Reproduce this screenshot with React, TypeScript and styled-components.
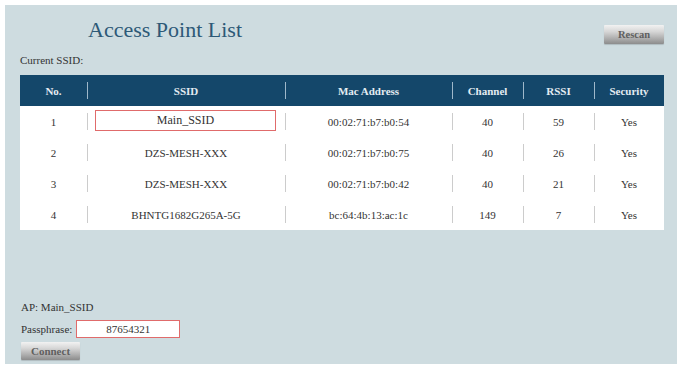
import styled, { createGlobalStyle } from "styled-components"

const GlobalStyle = createGlobalStyle`
  html, body {
    margin: 0;
    padding: 0;
    background: #ffffff;
  }
  body {
    font-family: "Liberation Serif", "Times New Roman", serif;
    color: #333333;
  }
`

const COLUMNS = "67px 198px 167px 71px 71px 70px"

interface AccessPoint {
    no: number;
    ssid: string;
    mac: string;
    channel: number;
    rssi: number;
    security: string;
}

const accessPoints: AccessPoint[] = [
    { no: 1, ssid: "Main_SSID", mac: "00:02:71:b7:b0:54", channel: 40, rssi: 59, security: "Yes" },
    { no: 2, ssid: "DZS-MESH-XXX", mac: "00:02:71:b7:b0:75", channel: 40, rssi: 26, security: "Yes" },
    { no: 3, ssid: "DZS-MESH-XXX", mac: "00:02:71:b7:b0:42", channel: 40, rssi: 21, security: "Yes" },
    { no: 4, ssid: "BHNTG1682G265A-5G", mac: "bc:64:4b:13:ac:1c", channel: 149, rssi: 7, security: "Yes" },
]

const Panel = styled.div`
  margin: 5px;
  width: 672px;
  height: 359px;
  box-sizing: border-box;
  padding: 12px 13px 0 15px;
  background: #cedce0;
  display: flex;
  flex-direction: column;
`

const TitleRow = styled.div`
  display: flex;
  justify-content: space-between;
  align-items: flex-start;
  height: 33px;
`

const Title = styled.h1`
  margin: 0 0 0 68px;
  font-size: 22px;
  line-height: 26px;
  font-weight: normal;
  color: #2d5977;
`

const GreyButton = styled.button<{ $width: number; $height: number }>`
  width: ${({ $width }): string => `${$width}px`};
  height: ${({ $height }): string => `${$height}px`};
  padding: 0;
  border: none;
  border-radius: 1px;
  background: linear-gradient(to bottom, #f2f2f2 0%, #d6d6d6 35%, #a9a9a9 75%, #8c8c8c 100%);
  box-shadow: 0 1px 1px rgba(0, 0, 0, 0.15);
  font-family: "Liberation Serif", serif;
  font-weight: bold;
  color: #5f5f5f;
  cursor: pointer;
`

const RescanButton = styled(GreyButton)`
  margin-top: 8px;
  font-size: 10.5px;
`

const ConnectButton = styled(GreyButton)`
  margin-top: 4px;
  font-size: 11px;
`

const Label = styled.div`
  font-size: 11px;
  line-height: 14px;
  color: #333333;
`

const CurrentSsid = styled(Label)`
  margin-top: 3px;
`

const Table = styled.div`
  margin-top: 8px;
  background: #ffffff;
  width: 644px;
`

const Row = styled.div<{ $header?: boolean }>`
  display: grid;
  grid-template-columns: ${COLUMNS};
  height: 31px;
  background: ${({ $header }): string => ($header ? "#14476a" : "transparent")};
  color: ${({ $header }): string => ($header ? "#e4ecf2" : "#333333")};
  font-weight: ${({ $header }): string => ($header ? "bold" : "normal")};
`

const Cell = styled.div<{ $header?: boolean }>`
  position: relative;
  display: flex;
  align-items: center;
  justify-content: center;
  font-size: 11px;

  &:not(:first-child)::before {
    content: "";
    position: absolute;
    left: 0;
    top: 7px;
    bottom: 7px;
    width: 1px;
    background: ${({ $header }): string => ($header ? "#9fb8ca" : "#cccccc")};
  }
`

const SsidBox = styled.div`
  flex: 1;
  align-self: stretch;
  margin: 4px 9px 6px 8px;
  border: 1px solid #e06b6b;
  background: #ffffff;
  display: flex;
  align-items: center;
  justify-content: center;
  font-size: 12px;
`

const Footer = styled.div`
  margin: 70px 0 0 1px;
  display: flex;
  flex-direction: column;
  align-items: flex-start;
`

const PassRow = styled.div`
  display: flex;
  align-items: center;
  margin-top: 6px;
`

const PassInput = styled.input`
  width: 104px;
  height: 18px;
  box-sizing: border-box;
  margin-left: 4px;
  padding: 0;
  border: 1px solid #e06b6b;
  background: #ffffff;
  font-family: "Liberation Serif", serif;
  font-size: 11px;
  color: #333333;
  text-align: center;
  outline: none;
`

const App = (): JSX.Element => (
    <>
        <GlobalStyle />
        <Panel>
            <TitleRow>
                <Title>Access Point List</Title>
                <RescanButton $width={60} $height={19}>Rescan</RescanButton>
            </TitleRow>
            <CurrentSsid>Current SSID:</CurrentSsid>
            <Table>
                <Row $header>
                    {["No.", "SSID", "Mac Address", "Channel", "RSSI", "Security"].map((h) => (
                        <Cell $header key={h}>{h}</Cell>
                    ))}
                </Row>
                {accessPoints.map((ap) => (
                    <Row key={ap.no + ap.mac}>
                        <Cell>{ap.no}</Cell>
                        <Cell>
                            {ap.no === 1 ? <SsidBox>{ap.ssid}</SsidBox> : ap.ssid}
                        </Cell>
                        <Cell>{ap.mac}</Cell>
                        <Cell>{ap.channel}</Cell>
                        <Cell>{ap.rssi}</Cell>
                        <Cell>{ap.security}</Cell>
                    </Row>
                ))}
            </Table>
            <Footer>
                <Label>AP: Main_SSID</Label>
                <PassRow>
                    <Label>Passphrase:</Label>
                    <PassInput value="87654321" readOnly />
                </PassRow>
                <ConnectButton $width={59} $height={18}>Connect</ConnectButton>
            </Footer>
        </Panel>
    </>
)

export default App
